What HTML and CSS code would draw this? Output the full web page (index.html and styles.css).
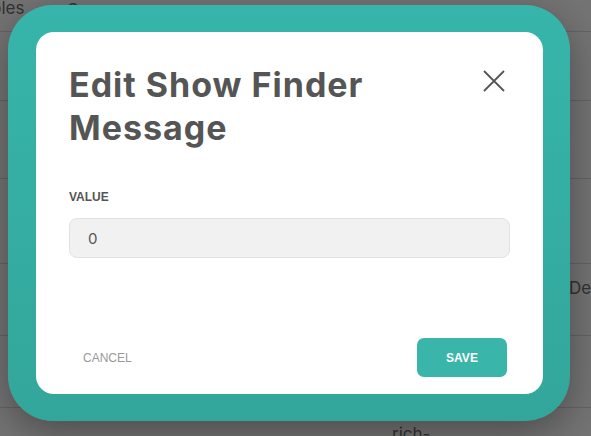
FILE: index.html
```html
<!DOCTYPE html>
<html lang="en">
<head>
<meta charset="utf-8">
<title>Edit Show Finder Message</title>
<link rel="stylesheet" href="styles.css">
</head>
<body>
<div class="page">
  <div class="row r1"><span class="cell c-name">bles</span><span class="cell c-val">O</span></div>
  <div class="row r2"></div>
  <div class="row r3"></div>
  <div class="row r4"></div>
  <div class="row r5"><span class="cell c-right">Der</span></div>
  <div class="row r6"></div>
  <div class="row r7"><span class="cell c-mid">rich-</span></div>
</div>
<div class="overlay"></div>
<div class="modal">
  <div class="modal-card">
    <div class="modal-header">
      <h1 class="modal-title">Edit Show Finder Message</h1>
      <button class="close-btn" type="button" aria-label="Close">
        <svg width="22" height="22" viewBox="0 0 22 22"><path d="M1 1 L21 21 M21 1 L1 21" stroke="#555" stroke-width="1.8" fill="none"/></svg>
      </button>
    </div>
    <label class="field-label">VALUE</label>
    <div class="field-input">0</div>
    <div class="modal-footer">
      <button class="btn-cancel" type="button">CANCEL</button>
      <button class="btn-save" type="button">SAVE</button>
    </div>
  </div>
</div>
</body>
</html>
```

FILE: styles.css
```css
html, body {
  margin: 0;
  padding: 0;
}
body {
  width: 591px;
  height: 436px;
  overflow: hidden;
  background: #ffffff;
  font-family: "Liberation Sans", Arial, sans-serif;
}
.page {
  display: flex;
  flex-direction: column;
}
.row {
  border-bottom: 1px solid #dcdcdc;
  display: flex;
  font-family: "Inter", "Liberation Sans", sans-serif;
  font-size: 17px;
  color: #707070;
}
.r1 { height: 31px; }
.r2 { height: 68px; }
.r3 { height: 77px; }
.r4 { height: 84px; }
.r5 { height: 71px; }
.r6 { height: 71px; }
.r7 { height: 40px; border-bottom: none; }
.cell { white-space: nowrap; }
.c-name { margin-left: -9px; margin-top: -2px; }
.c-val { margin-left: 42px; margin-top: 0; }
.c-right { margin-left: 569px; margin-top: 14px; }
.c-mid { margin-left: 392px; margin-top: 16px; }

.overlay {
  position: fixed;
  inset: 0;
  background: rgba(0, 0, 0, 0.55);
}
.modal {
  position: fixed;
  left: 8px;
  top: 5px;
  width: 562px;
  height: 416px;
  box-sizing: border-box;
  padding: 27px 27px 27px 28px;
  border-radius: 45px;
  background: linear-gradient(180deg, #37b5aa 0%, #33a69b 100%);
  box-shadow: 0 12px 40px rgba(0, 0, 0, 0.35);
  display: flex;
}
.modal-card {
  flex: 1;
  background: #ffffff;
  border-radius: 18px;
  padding: 31px 33px 17px 33px;
  display: flex;
  flex-direction: column;
}
.modal-header {
  display: flex;
  align-items: flex-start;
  gap: 40px;
}
.modal-title {
  flex: 1;
  margin: 0;
  font-family: "Inter", "Liberation Sans", sans-serif;
  font-weight: 700;
  font-size: 34px;
  letter-spacing: 1px;
  line-height: 43px;
  color: #555555;
}
.close-btn {
  width: 32px;
  height: 32px;
  margin-top: 2px;
  margin-right: 0;
  padding: 0;
  border: none;
  background: none;
  display: flex;
  align-items: center;
  justify-content: center;
}
.field-label {
  margin-top: 41px;
  font-size: 12px;
  line-height: 14px;
  font-weight: 700;
  color: #555555;
}
.field-input {
  margin-top: 14px;
  height: 40px;
  box-sizing: border-box;
  border: 1px solid #e2e2e2;
  border-radius: 8px;
  background: #f1f1f1;
  padding-left: 18px;
  display: flex;
  align-items: center;
  font-family: "Inter", "Liberation Sans", sans-serif;
  font-size: 15px;
  color: #555555;
}
.modal-footer {
  margin-top: auto;
  margin-right: 3px;
  display: flex;
  align-items: center;
  justify-content: space-between;
}
.btn-cancel {
  border: none;
  background: none;
  padding: 0 14px;
  font-family: "Liberation Sans", Arial, sans-serif;
  font-size: 12px;
  color: #999999;
}
.btn-save {
  width: 90px;
  height: 39px;
  border: none;
  border-radius: 7px;
  background: #39b5aa;
  color: #ffffff;
  font-family: "Liberation Sans", Arial, sans-serif;
  font-weight: 700;
  font-size: 12px;
}
```
